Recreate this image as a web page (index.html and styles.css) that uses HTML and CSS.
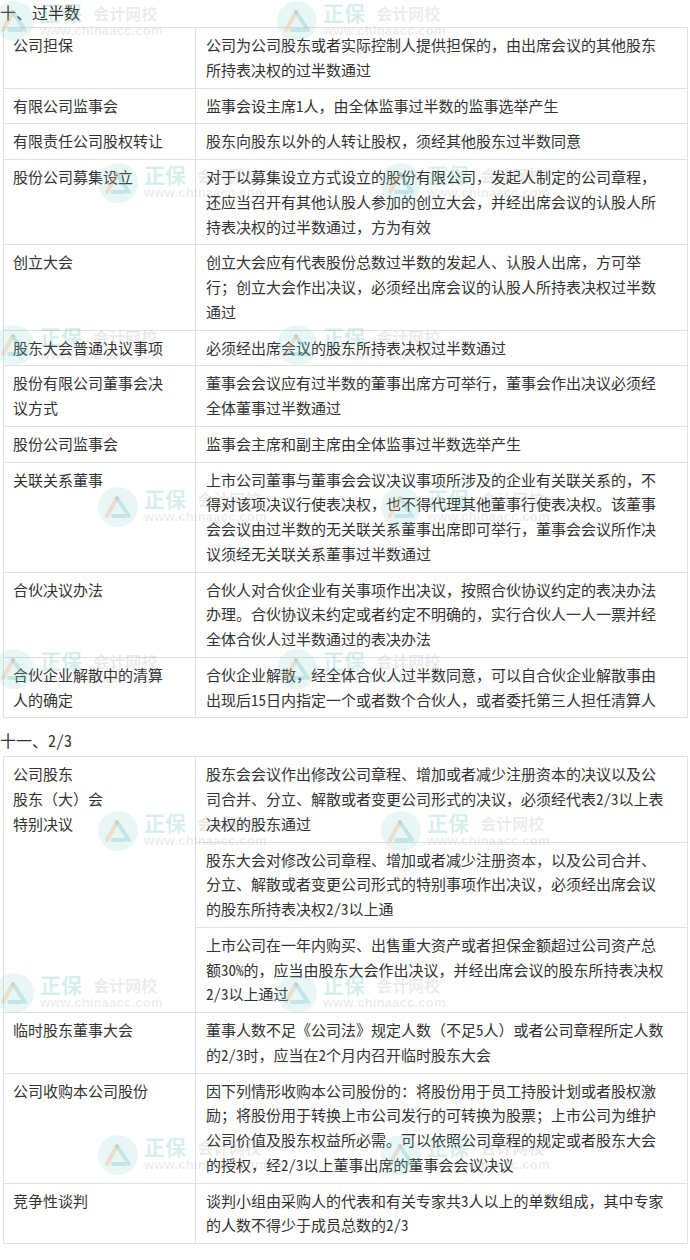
FILE: index.html
```html
<!DOCTYPE html>
<html lang="zh-CN">
<head>
<meta charset="utf-8">
<title>过半数 / 2/3</title>
<link rel="stylesheet" href="styles.css">
</head>
<body>
<div class="page">
  <h2 class="section-title">十、过半数</h2>
  <table class="rules">
    <colgroup><col class="col-term"><col class="col-rule"></colgroup>
    <tr><td class="term">公司担保</td><td class="rule">公司为公司股东或者实际控制人提供担保的，由出席会议的其他股东所持表决权的过半数通过</td></tr>
    <tr><td class="term">有限公司监事会</td><td class="rule">监事会设主席1人，由全体监事过半数的监事选举产生</td></tr>
    <tr><td class="term">有限责任公司股权转让</td><td class="rule">股东向股东以外的人转让股权，须经其他股东过半数同意</td></tr>
    <tr><td class="term">股份公司募集设立</td><td class="rule">对于以募集设立方式设立的股份有限公司，发起人制定的公司章程，还应当召开有其他认股人参加的创立大会，并经出席会议的认股人所持表决权的过半数通过，方为有效</td></tr>
    <tr><td class="term">创立大会</td><td class="rule">创立大会应有代表股份总数过半数的发起人、认股人出席，方可举行；创立大会作出决议，必须经出席会议的认股人所持表决权过半数通过</td></tr>
    <tr><td class="term">股东大会普通决议事项</td><td class="rule">必须经出席会议的股东所持表决权过半数通过</td></tr>
    <tr><td class="term">股份有限公司董事会决议方式</td><td class="rule">董事会会议应有过半数的董事出席方可举行，董事会作出决议必须经全体董事过半数通过</td></tr>
    <tr><td class="term">股份公司监事会</td><td class="rule">监事会主席和副主席由全体监事过半数选举产生</td></tr>
    <tr><td class="term">关联关系董事</td><td class="rule">上市公司董事与董事会会议决议事项所涉及的企业有关联关系的，不得对该项决议行使表决权，也不得代理其他董事行使表决权。该董事会会议由过半数的无关联关系董事出席即可举行，董事会会议所作决议须经无关联关系董事过半数通过</td></tr>
    <tr><td class="term">合伙决议办法</td><td class="rule">合伙人对合伙企业有关事项作出决议，按照合伙协议约定的表决办法办理。合伙协议未约定或者约定不明确的，实行合伙人一人一票并经全体合伙人过半数通过的表决办法</td></tr>
    <tr><td class="term">合伙企业解散中的清算人的确定</td><td class="rule">合伙企业解散，经全体合伙人过半数同意，可以自合伙企业解散事由出现后15日内指定一个或者数个合伙人，或者委托第三人担任清算人</td></tr>
  </table>

  <h2 class="section-title second">十一、2/3</h2>
  <table class="rules">
    <colgroup><col class="col-term"><col class="col-rule"></colgroup>
    <tr><td class="term" rowspan="3">公司股东<br>股东（大）会<br>特别决议</td><td class="rule">股东会会议作出修改公司章程、增加或者减少注册资本的决议以及公司合并、分立、解散或者变更公司形式的决议，必须经代表2/3以上表决权的股东通过</td></tr>
    <tr><td class="rule">股东大会对修改公司章程、增加或者减少注册资本，以及公司合并、分立、解散或者变更公司形式的特别事项作出决议，必须经出席会议的股东所持表决权2/3以上通</td></tr>
    <tr><td class="rule">上市公司在一年内购买、出售重大资产或者担保金额超过公司资产总额30%的，应当由股东大会作出决议，并经出席会议的股东所持表决权2/3以上通过</td></tr>
    <tr><td class="term">临时股东董事大会</td><td class="rule">董事人数不足《公司法》规定人数（不足5人）或者公司章程所定人数的2/3时，应当在2个月内召开临时股东大会</td></tr>
    <tr><td class="term">公司收购本公司股份</td><td class="rule">因下列情形收购本公司股份的：将股份用于员工持股计划或者股权激励；将股份用于转换上市公司发行的可转换为股票；上市公司为维护公司价值及股东权益所必需。可以依照公司章程的规定或者股东大会的授权，经2/3以上董事出席的董事会会议决议</td></tr>
    <tr><td class="term">竞争性谈判</td><td class="rule">谈判小组由采购人的代表和有关专家共3人以上的单数组成，其中专家的人数不得少于成员总数的2/3</td></tr>
  </table>

  <div class="watermarks" aria-hidden="true">
    <div class="wm-row even"><div class="mark"><svg class="mark-icon" viewBox="0 0 40 40"><circle cx="20" cy="20" r="20"/><path class="o" d="M9 29 L19 11"/><path class="t" d="M19 11 L31 29 M15 29 H27"/></svg><div class="mark-text"><span class="zb">正保</span><span class="kj">会计网校</span><span class="url">www.chinaacc.com</span></div></div><div class="mark"><svg class="mark-icon" viewBox="0 0 40 40"><circle cx="20" cy="20" r="20"/><path class="o" d="M9 29 L19 11"/><path class="t" d="M19 11 L31 29 M15 29 H27"/></svg><div class="mark-text"><span class="zb">正保</span><span class="kj">会计网校</span><span class="url">www.chinaacc.com</span></div></div></div>
    <div class="wm-row odd"><div class="mark"><svg class="mark-icon" viewBox="0 0 40 40"><circle cx="20" cy="20" r="20"/><path class="o" d="M9 29 L19 11"/><path class="t" d="M19 11 L31 29 M15 29 H27"/></svg><div class="mark-text"><span class="zb">正保</span><span class="kj">会计网校</span><span class="url">www.chinaacc.com</span></div></div><div class="mark"><svg class="mark-icon" viewBox="0 0 40 40"><circle cx="20" cy="20" r="20"/><path class="o" d="M9 29 L19 11"/><path class="t" d="M19 11 L31 29 M15 29 H27"/></svg><div class="mark-text"><span class="zb">正保</span><span class="kj">会计网校</span><span class="url">www.chinaacc.com</span></div></div></div>
    <div class="wm-row even"><div class="mark"><svg class="mark-icon" viewBox="0 0 40 40"><circle cx="20" cy="20" r="20"/><path class="o" d="M9 29 L19 11"/><path class="t" d="M19 11 L31 29 M15 29 H27"/></svg><div class="mark-text"><span class="zb">正保</span><span class="kj">会计网校</span><span class="url">www.chinaacc.com</span></div></div><div class="mark"><svg class="mark-icon" viewBox="0 0 40 40"><circle cx="20" cy="20" r="20"/><path class="o" d="M9 29 L19 11"/><path class="t" d="M19 11 L31 29 M15 29 H27"/></svg><div class="mark-text"><span class="zb">正保</span><span class="kj">会计网校</span><span class="url">www.chinaacc.com</span></div></div></div>
    <div class="wm-row odd"><div class="mark"><svg class="mark-icon" viewBox="0 0 40 40"><circle cx="20" cy="20" r="20"/><path class="o" d="M9 29 L19 11"/><path class="t" d="M19 11 L31 29 M15 29 H27"/></svg><div class="mark-text"><span class="zb">正保</span><span class="kj">会计网校</span><span class="url">www.chinaacc.com</span></div></div><div class="mark"><svg class="mark-icon" viewBox="0 0 40 40"><circle cx="20" cy="20" r="20"/><path class="o" d="M9 29 L19 11"/><path class="t" d="M19 11 L31 29 M15 29 H27"/></svg><div class="mark-text"><span class="zb">正保</span><span class="kj">会计网校</span><span class="url">www.chinaacc.com</span></div></div></div>
    <div class="wm-row even"><div class="mark"><svg class="mark-icon" viewBox="0 0 40 40"><circle cx="20" cy="20" r="20"/><path class="o" d="M9 29 L19 11"/><path class="t" d="M19 11 L31 29 M15 29 H27"/></svg><div class="mark-text"><span class="zb">正保</span><span class="kj">会计网校</span><span class="url">www.chinaacc.com</span></div></div><div class="mark"><svg class="mark-icon" viewBox="0 0 40 40"><circle cx="20" cy="20" r="20"/><path class="o" d="M9 29 L19 11"/><path class="t" d="M19 11 L31 29 M15 29 H27"/></svg><div class="mark-text"><span class="zb">正保</span><span class="kj">会计网校</span><span class="url">www.chinaacc.com</span></div></div></div>
    <div class="wm-row odd"><div class="mark"><svg class="mark-icon" viewBox="0 0 40 40"><circle cx="20" cy="20" r="20"/><path class="o" d="M9 29 L19 11"/><path class="t" d="M19 11 L31 29 M15 29 H27"/></svg><div class="mark-text"><span class="zb">正保</span><span class="kj">会计网校</span><span class="url">www.chinaacc.com</span></div></div><div class="mark"><svg class="mark-icon" viewBox="0 0 40 40"><circle cx="20" cy="20" r="20"/><path class="o" d="M9 29 L19 11"/><path class="t" d="M19 11 L31 29 M15 29 H27"/></svg><div class="mark-text"><span class="zb">正保</span><span class="kj">会计网校</span><span class="url">www.chinaacc.com</span></div></div></div>
    <div class="wm-row even"><div class="mark"><svg class="mark-icon" viewBox="0 0 40 40"><circle cx="20" cy="20" r="20"/><path class="o" d="M9 29 L19 11"/><path class="t" d="M19 11 L31 29 M15 29 H27"/></svg><div class="mark-text"><span class="zb">正保</span><span class="kj">会计网校</span><span class="url">www.chinaacc.com</span></div></div><div class="mark"><svg class="mark-icon" viewBox="0 0 40 40"><circle cx="20" cy="20" r="20"/><path class="o" d="M9 29 L19 11"/><path class="t" d="M19 11 L31 29 M15 29 H27"/></svg><div class="mark-text"><span class="zb">正保</span><span class="kj">会计网校</span><span class="url">www.chinaacc.com</span></div></div></div>
    <div class="wm-row odd"><div class="mark"><svg class="mark-icon" viewBox="0 0 40 40"><circle cx="20" cy="20" r="20"/><path class="o" d="M9 29 L19 11"/><path class="t" d="M19 11 L31 29 M15 29 H27"/></svg><div class="mark-text"><span class="zb">正保</span><span class="kj">会计网校</span><span class="url">www.chinaacc.com</span></div></div><div class="mark"><svg class="mark-icon" viewBox="0 0 40 40"><circle cx="20" cy="20" r="20"/><path class="o" d="M9 29 L19 11"/><path class="t" d="M19 11 L31 29 M15 29 H27"/></svg><div class="mark-text"><span class="zb">正保</span><span class="kj">会计网校</span><span class="url">www.chinaacc.com</span></div></div></div>
  </div>
</div>
</body>
</html>
```

FILE: styles.css
```css
html, body {
  margin: 0;
  padding: 0;
  background: #ffffff;
}

body {
  font-family: "Noto Sans Mono CJK SC", "Noto Sans CJK SC", sans-serif;
  color: #333333;
  font-size: 15px;
  text-spacing-trim: space-all;
}

.page {
  position: relative;
  width: 690px;
  min-height: 1260px;
  overflow: hidden;
}

.section-title {
  margin: 0 0 3px 0;
  font-size: 16px;
  font-weight: normal;
  line-height: 24px;
  color: #333333;
}

.section-title.second {
  margin-top: 10px;
  margin-bottom: 4px;
}

.rules {
  border-collapse: collapse;
  table-layout: fixed;
  width: 684px;
  margin-left: 3px;
}

.col-term { width: 192px; }
.col-rule { width: 492px; }

.rules td {
  border: 1px solid #e1e1e1;
  vertical-align: top;
  line-height: 24.75px;
  padding-top: 5px;
  padding-bottom: 5px;
}

.rules .term {
  padding-left: 9px;
  padding-right: 27px;
}

.rules .rule {
  padding-left: 10px;
  padding-right: 21px;
}

/* watermark overlay */
.watermarks {
  position: absolute;
  top: 0;
  left: 0;
  right: 0;
  display: flex;
  flex-direction: column;
  pointer-events: none;
}

.wm-row {
  display: flex;
  height: 162px;
}

.wm-row.even { margin-left: -6px; }
.wm-row.odd { margin-left: 98px; }

.mark {
  flex: none;
  width: 283px;
  height: 48px;
  display: flex;
  gap: 6px;
  align-items: flex-start;
}

.mark-icon {
  width: 40px;
  height: 40px;
  flex: none;
  margin-top: 1px;
}

.mark-icon circle { fill: rgba(120, 200, 200, 0.16); }
.mark-icon .o { stroke: rgba(240, 160, 100, 0.28); stroke-width: 4; fill: none; stroke-linecap: round; }
.mark-icon .t { stroke: rgba(60, 170, 170, 0.22); stroke-width: 4; fill: none; stroke-linecap: round; }

.mark-text {
  display: grid;
  grid-template-columns: auto auto;
  align-items: end;
  column-gap: 6px;
  font-family: "Noto Sans CJK SC", sans-serif;
}

.mark-text .zb {
  font-size: 21px;
  line-height: 24px;
  font-weight: bold;
  color: rgba(40, 170, 160, 0.2);
}

.mark-text .kj {
  font-size: 16px;
  line-height: 22px;
  font-weight: bold;
  color: rgba(90, 90, 90, 0.12);
}

.mark-text .url {
  grid-column: 1 / span 2;
  font-family: "Liberation Sans", sans-serif;
  font-size: 13px;
  line-height: 14px;
  font-weight: bold;
  color: rgba(90, 90, 90, 0.12);
  letter-spacing: 0.2px;
}
```
